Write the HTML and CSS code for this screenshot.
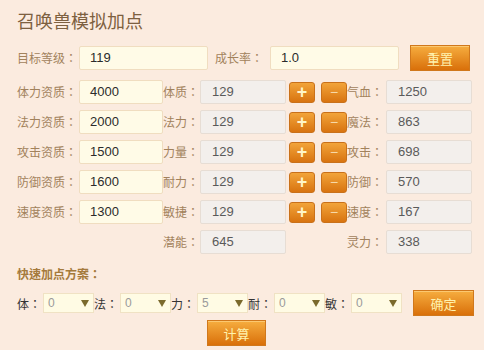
FILE: index.html
```html
<!DOCTYPE html>
<html lang="zh">
<head>
<meta charset="utf-8">
<title>召唤兽模拟加点</title>
<link rel="stylesheet" href="styles.css">
</head>
<body>
<div class="page">
  <h1 class="title">召唤兽模拟加点</h1>

  <div class="row row-top">
    <span class="lbl lbl-main">目标等级：</span>
    <div class="inp inp-wide">119</div>
    <span class="lbl lbl-growth">成长率：</span>
    <div class="inp inp-wide">1.0</div>
    <button class="btn btn-reset">重置</button>
  </div>

  <div class="grid">
    <div class="row">
      <span class="lbl lbl-main">体力资质：</span>
      <div class="inp inp-apt">4000</div>
      <span class="lbl lbl-mid">体质：</span>
      <div class="ro">129</div>
      <button class="pm plus">+</button>
      <button class="pm minus">−</button>
      <span class="lbl lbl-right">气血：</span>
      <div class="ro">1250</div>
    </div>
    <div class="row">
      <span class="lbl lbl-main">法力资质：</span>
      <div class="inp inp-apt">2000</div>
      <span class="lbl lbl-mid">法力：</span>
      <div class="ro">129</div>
      <button class="pm plus">+</button>
      <button class="pm minus">−</button>
      <span class="lbl lbl-right">魔法：</span>
      <div class="ro">863</div>
    </div>
    <div class="row">
      <span class="lbl lbl-main">攻击资质：</span>
      <div class="inp inp-apt">1500</div>
      <span class="lbl lbl-mid">力量：</span>
      <div class="ro">129</div>
      <button class="pm plus">+</button>
      <button class="pm minus">−</button>
      <span class="lbl lbl-right">攻击：</span>
      <div class="ro">698</div>
    </div>
    <div class="row">
      <span class="lbl lbl-main">防御资质：</span>
      <div class="inp inp-apt">1600</div>
      <span class="lbl lbl-mid">耐力：</span>
      <div class="ro">129</div>
      <button class="pm plus">+</button>
      <button class="pm minus">−</button>
      <span class="lbl lbl-right">防御：</span>
      <div class="ro">570</div>
    </div>
    <div class="row">
      <span class="lbl lbl-main">速度资质：</span>
      <div class="inp inp-apt">1300</div>
      <span class="lbl lbl-mid">敏捷：</span>
      <div class="ro">129</div>
      <button class="pm plus">+</button>
      <button class="pm minus">−</button>
      <span class="lbl lbl-right">速度：</span>
      <div class="ro">167</div>
    </div>
    <div class="row">
      <span class="lbl lbl-main"></span>
      <div class="spacer-apt"></div>
      <span class="lbl lbl-mid">潜能：</span>
      <div class="ro">645</div>
      <div class="spacer-pm"></div>
      <span class="lbl lbl-right">灵力：</span>
      <div class="ro">338</div>
    </div>
  </div>

  <div class="quick-title">快速加点方案：</div>

  <div class="row row-quick">
    <span class="qlbl">体：</span>
    <div class="sel"><span>0</span><i class="arrow"></i></div>
    <span class="qlbl">法：</span>
    <div class="sel"><span>0</span><i class="arrow"></i></div>
    <span class="qlbl">力：</span>
    <div class="sel"><span>5</span><i class="arrow"></i></div>
    <span class="qlbl">耐：</span>
    <div class="sel"><span>0</span><i class="arrow"></i></div>
    <span class="qlbl">敏：</span>
    <div class="sel"><span>0</span><i class="arrow"></i></div>
    <button class="btn btn-ok">确定</button>
  </div>

  <div class="calc-row">
    <button class="btn btn-calc">计算</button>
  </div>
</div>
</body>
</html>
```

FILE: styles.css
```css
* { box-sizing: border-box; }

html, body {
  margin: 0;
  padding: 0;
  background: #fbebdf;
}

body {
  font-family: "Liberation Sans", "Noto Sans CJK SC", sans-serif;
  font-size: 12px;
  color: #333;
}

.page {
  width: 484px;
  height: 350px;
  padding: 10px 0 0 17px;
  overflow: hidden;
}

.title {
  margin: 0;
  font-size: 18px;
  line-height: 24px;
  font-weight: normal;
  color: #7d6040;
}

.row {
  display: flex;
  align-items: center;
}

.row-top {
  margin-top: 11px;
  height: 26px;
}

.grid {
  margin-top: 9px;
  display: flex;
  flex-direction: column;
  gap: 6px;
}

.grid .row {
  height: 24px;
}

.lbl, .qlbl, .quick-title {
  font-family: "Noto Sans CJK TC", "Noto Sans CJK SC", sans-serif;
  font-feature-settings: "locl" 0;
}

.lbl {
  font-size: 12px;
  color: #a2825c;
  white-space: nowrap;
  line-height: 24px;
}

.lbl-main { width: 62px; }
.lbl-growth { width: 55px; margin-left: 7px; }
.lbl-mid { width: 37px; }
.lbl-right { width: 39px; }

.inp, .ro {
  height: 24px;
  line-height: 22px;
  font-size: 13px;
  padding-left: 10px;
  border-radius: 2px;
}

.inp {
  background: #fffbe7;
  border: 1px solid #f0ddc0;
  color: #2b2b2b;
}

.inp-wide { width: 129px; }
.inp-apt { width: 84px; }
.spacer-apt { width: 84px; }

.ro {
  width: 86px;
  background: #f3efec;
  border: 1px solid #e7ddd4;
  color: #5a5a5a;
  padding-left: 11px;
}

.pm {
  width: 26px;
  height: 21px;
  padding: 0;
  border: 1px solid #c9711a;
  border-radius: 3px;
  background: linear-gradient(#f2a43a, #d87410);
  font-family: "Liberation Sans", sans-serif;
  line-height: 18px;
  cursor: pointer;
}

.plus {
  margin-left: 3px;
  color: #fff6c8;
  font-size: 18px;
  font-weight: bold;
}

.minus {
  margin-left: 6px;
  color: #f7d9a8;
  font-size: 14px;
}

.spacer-pm { width: 61px; }

.btn {
  padding: 0;
  border: 1px solid #d0781c;
  background: linear-gradient(#f6ad3f, #d9700a);
  color: #fff2ae;
  font-family: "Noto Sans CJK SC", sans-serif;
  font-size: 13px;
  box-shadow: inset 0 1px 0 #fcc870;
  cursor: pointer;
}

.btn-reset {
  width: 60px;
  height: 26px;
  margin-left: 11px;
}

.quick-title {
  margin-top: 12px;
  line-height: 16px;
  font-size: 12px;
  font-weight: bold;
  color: #a57a3c;
}

.row-quick {
  margin-top: 8px;
  height: 26px;
}

.qlbl {
  width: 26px;
  font-size: 12px;
  color: #333;
  white-space: nowrap;
}

.sel {
  width: 51px;
  height: 20px;
  background: #fffbe4;
  border: 1px solid #f0e2c4;
  display: flex;
  align-items: center;
  justify-content: space-between;
  padding: 0 4px 0 4px;
  color: #9a9a9a;
  font-size: 12px;
}

.arrow {
  width: 0;
  height: 0;
  border-left: 4px solid transparent;
  border-right: 4px solid transparent;
  border-top: 7px solid #7b6a2c;
}

.btn-ok {
  width: 61px;
  height: 26px;
  margin-left: 11px;
}

.calc-row {
  margin-top: 4px;
  padding-left: 190px;
}

.btn-calc {
  width: 59px;
  height: 26px;
}
```
